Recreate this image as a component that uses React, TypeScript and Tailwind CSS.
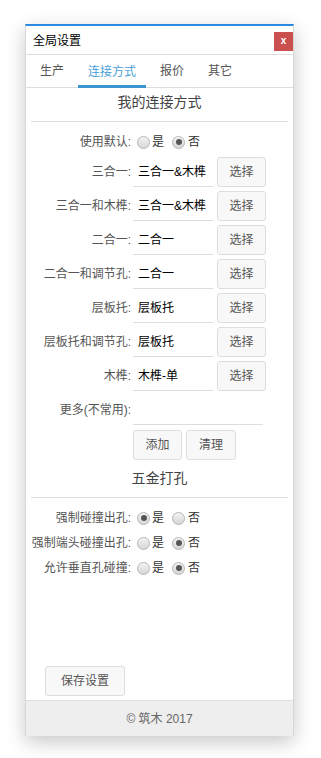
import React from "react";

const font = { fontFamily: '"Liberation Sans", "Noto Sans CJK SC", sans-serif' };

function Radio({ checked }: { checked?: boolean }) {
  return (
    <span className="flex h-[13px] w-[13px] items-center justify-center rounded-full border border-[#b5b5b5] bg-gradient-to-b from-[#f4f4f4] to-[#d6d6d6]">
      {checked && <span className="h-[6px] w-[6px] rounded-full bg-[#555]" />}
    </span>
  );
}

function YesNo({ yes }: { yes: boolean }) {
  return (
    <div className="ml-[6px] flex items-center text-[12px] text-[#333]">
      <Radio checked={yes} />
      <span className="ml-[2px]">是</span>
      <span className="ml-[8px]">
        <Radio checked={!yes} />
      </span>
      <span className="ml-[3px]">否</span>
    </div>
  );
}

function Label({ children }: { children: React.ReactNode }) {
  return <div className="w-[105px] shrink-0 text-right text-[12px] text-[#555]">{children}</div>;
}

function Btn({ children, className = "" }: { children: React.ReactNode; className?: string }) {
  return (
    <button className={`h-[30px] rounded-[3px] border border-[#ddd] bg-[#f8f8f8] text-[12px] text-[#555] ${className}`}>
      {children}
    </button>
  );
}

function PickRow({ label, value }: { label: string; value: string }) {
  return (
    <div className="flex h-[30px] items-center">
      <Label>{label}</Label>
      <div className="ml-[2px] flex h-[30px] w-[80px] items-center border-b border-[#ddd] pl-[5px] text-[12px] text-black">
        {value}
      </div>
      <Btn className="ml-[4px] w-[49px]">选择</Btn>
    </div>
  );
}

export default function App() {
  const rows = [
    ["三合一:", "三合一&木榫"],
    ["三合一和木榫:", "三合一&木榫"],
    ["二合一:", "二合一"],
    ["二合一和调节孔:", "二合一"],
    ["层板托:", "层板托"],
    ["层板托和调节孔:", "层板托"],
    ["木榫:", "木榫-单"],
  ];

  return (
    <div className="min-h-[758px] bg-white pl-[25px] pt-[24px]" style={font}>
      <div className="flex h-[712px] w-[269px] flex-col border-x border-t-2 border-x-[#d8d8d8] border-t-[#2a8ae0] bg-white shadow-[0_6px_18px_rgba(0,0,0,0.22)]">
        {/* title */}
        <div className="flex h-[29px] items-start justify-between border-b border-[#ddd] pl-[7px]">
          <span className="mt-[6px] text-[12px] text-black">全局设置</span>
          <span className="mt-[6px] flex h-[19px] w-[19px] items-center justify-center bg-[#c9504f] pb-[1px] text-[10px] font-semibold leading-none text-white">
            x
          </span>
        </div>

        {/* tabs */}
        <div className="flex h-[33px] gap-[4px] border-b border-[#ddd] pl-[4px] text-[12px] text-[#555]">
          <div className="flex items-center px-[10px]">生产</div>
          <div className="-mb-px flex items-center border-b-[3px] border-[#3a96d0] px-[10px] pt-[3px] text-[#4a9fd8]">
            连接方式
          </div>
          <div className="flex items-center px-[10px]">报价</div>
          <div className="flex items-center px-[10px]">其它</div>
        </div>

        {/* my connections */}
        <div className="mx-[5px] mt-[5px] border-b border-[#ddd] pb-[10px] text-center text-[14px] leading-[18px] text-[#444]">
          我的连接方式
        </div>

        <div className="mt-[8px] flex h-[24px] items-center">
          <Label>使用默认:</Label>
          <YesNo yes={false} />
        </div>

        <div className="mt-[3px] flex flex-col gap-[4px]">
          {rows.map(([l, v]) => (
            <PickRow key={l} label={l} value={v} />
          ))}
        </div>

        <div className="mt-[4px] flex h-[30px] items-center">
          <Label>更多(不常用):</Label>
          <div className="ml-[2px] h-[30px] w-[130px] border-b border-[#ddd]" />
        </div>
        <div className="ml-[107px] mt-[5px] flex gap-[4px]">
          <Btn className="w-[49px]">添加</Btn>
          <Btn className="w-[50px]">清理</Btn>
        </div>

        {/* hardware */}
        <div className="mx-[5px] mt-[9px] border-b border-[#ddd] pb-[10px] text-center text-[14px] leading-[18px] text-[#444]">
          五金打孔
        </div>

        <div className="mt-[8px] flex flex-col gap-[1px]">
          <div className="flex h-[24px] items-center">
            <Label>强制碰撞出孔:</Label>
            <YesNo yes={true} />
          </div>
          <div className="flex h-[24px] items-center">
            <Label>强制端头碰撞出孔:</Label>
            <YesNo yes={false} />
          </div>
          <div className="flex h-[24px] items-center">
            <Label>允许垂直孔碰撞:</Label>
            <YesNo yes={false} />
          </div>
        </div>

        <div className="flex-1" />

        <div className="mb-[4px] pl-[19px]">
          <Btn className="w-[80px]">保存设置</Btn>
        </div>

        <div className="flex h-[36px] items-center justify-center border-t border-[#ddd] bg-[#eeeeee] text-[12px] text-[#666]">
          © 筑木 2017
        </div>
      </div>
    </div>
  );
}
